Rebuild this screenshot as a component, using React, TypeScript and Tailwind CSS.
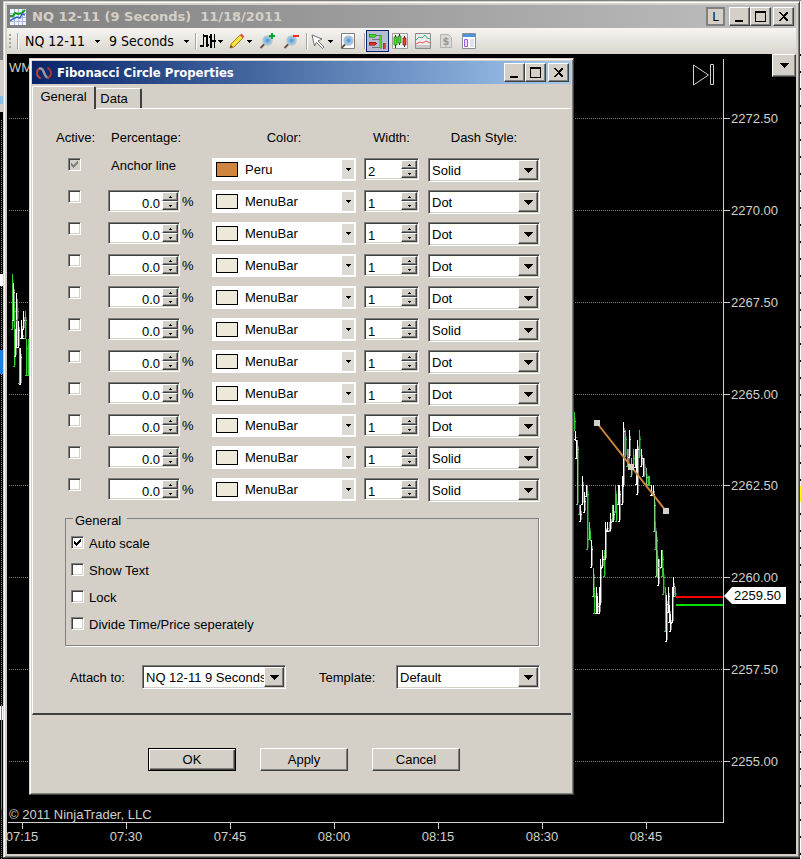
import { ReactNode, useState } from 'react'

const raised = 'bg-[#d4d0c8] border border-t-white border-l-white border-b-[#404040] border-r-[#404040] shadow-[inset_-1px_-1px_#808080]'
const sunken = 'bg-white border border-t-[#808080] border-l-[#808080] border-b-white border-r-white shadow-[inset_1px_1px_#404040,inset_-1px_-1px_#d4d0c8]'
const frame = 'bg-[#d4d0c8] border border-t-[#d4d0c8] border-l-[#d4d0c8] border-b-[#404040] border-r-[#404040] shadow-[inset_1px_1px_#fff,inset_-1px_-1px_#808080]'

const dashStyles = ['Solid', 'Dot', 'Dot', 'Dot', 'Dot', 'Solid', 'Dot', 'Dot', 'Dot', 'Solid', 'Solid']

const prices = [
    { y: 118, label: '2272.50' },
    { y: 210, label: '2270.00' },
    { y: 302, label: '2267.50' },
    { y: 394, label: '2265.00' },
    { y: 485, label: '2262.50' },
    { y: 577, label: '2260.00' },
    { y: 669, label: '2257.50' },
    { y: 761, label: '2255.00' },
]

const times = [
    { x: 22, label: '07:15' },
    { x: 126, label: '07:30' },
    { x: 230, label: '07:45' },
    { x: 334, label: '08:00' },
    { x: 438, label: '08:15' },
    { x: 542, label: '08:30' },
    { x: 646, label: '08:45' },
]

const barColors: Record<string, string> = { g: '#32cd32', w: '#ffffff', l: '#7fd07f', s: '#808080' }

// x, high, low, colour
const bars: [number, number, number, string][] = [
    [12, 274, 330, 'g'], [13, 283, 321, 'w'], [14, 302, 367, 'g'], [15, 329, 357, 'w'], [16, 293, 348, 'w'],
    [17, 302, 321, 's'], [18, 321, 348, 'w'], [19, 348, 384, 'l'], [20, 348, 385, 'w'], [21, 320, 339, 'w'], [22, 329, 339, 'w'],
    [23, 311, 330, 'w'], [25, 311, 339, 'g'], [26, 339, 376, 'g'], [28, 339, 376, 'g'],
    [574, 412, 431, 'g'], [575, 431, 440, 'w'], [576, 440, 459, 'w'], [577, 440, 505, 'l'], [579, 505, 515, 'g'],
    [580, 505, 522, 'w'], [582, 476, 505, 'w'], [584, 492, 513, 'w'], [586, 485, 497, 'w'], [587, 485, 550, 'g'],
    [589, 522, 540, 'l'], [590, 531, 540, 'g'], [591, 540, 568, 'w'], [593, 568, 597, 'l'], [594, 587, 614, 'g'],
    [596, 587, 614, 'w'], [597, 597, 614, 'w'], [599, 587, 614, 'w'], [600, 559, 605, 'w'], [602, 550, 568, 'w'],
    [604, 550, 577, 'g'], [605, 522, 560, 'w'], [607, 522, 531, 'w'], [609, 522, 531, 's'], [610, 513, 531, 'w'], [612, 505, 522, 'l'],
    [613, 505, 522, 'w'], [615, 485, 513, 'g'], [616, 495, 522, 'g'], [618, 485, 505, 'w'], [619, 485, 522, 'w'],
    [622, 476, 505, 'w'], [623, 422, 487, 'w'], [625, 430, 457, 'g'], [627, 449, 467, 'g'], [628, 449, 467, 's'], [629, 430, 458, 'w'],
    [631, 458, 477, 'l'], [633, 449, 467, 'g'], [635, 449, 468, 'w'], [636, 449, 485, 'w'], [637, 440, 495, 'w'], [639, 430, 458, 'g'],
    [641, 449, 467, 'w'], [643, 458, 477, 'w'], [644, 458, 477, 's'], [646, 468, 485, 'l'], [648, 476, 485, 'g'],
    [649, 476, 485, 'g'], [651, 485, 496, 'w'], [653, 485, 496, 'w'], [654, 496, 532, 'l'], [655, 522, 550, 's'],
    [656, 531, 577, 'l'], [657, 550, 577, 'g'], [658, 559, 586, 'w'], [659, 559, 568, 's'], [661, 550, 568, 'w'], [662, 550, 577, 'g'],
    [663, 568, 595, 'g'], [665, 587, 632, 'g'], [666, 595, 642, 'w'], [668, 587, 613, 'w'], [669, 605, 623, 'w'],
    [670, 614, 632, 'w'], [672, 587, 623, 'w'], [673, 577, 597, 'w'], [675, 587, 597, 'g'],
]

function Icon({ children }: { children: ReactNode }) {
    return (
        <svg width="16" height="16" viewBox="0 0 16 16" className="shrink-0" aria-hidden="true">
            {children}
        </svg>
    )
}

function Caret() {
    return (
        <svg width="5" height="3" viewBox="0 0 5 3" className="shrink-0" shapeRendering="crispEdges" aria-hidden="true">
            <path d="M0 0h5L2.500 3z" />
        </svg>
    )
}

function Separator() {
    return <span className="h-4 w-px bg-[#a9a69f] shadow-[1px_0_#fff]" />
}

function CaptionButton({ kind }: { kind: 'Minimize' | 'Maximize' | 'Close' }) {
    return (
        <button aria-label={kind} className={`${raised} flex h-[19px] w-[21px] items-center justify-center`}>
            <svg width="13" height="13" viewBox="0 0 13 13" shapeRendering="crispEdges" aria-hidden="true">
                {kind === 'Minimize' && <path d="M2 10h8v2H2z" />}
                {kind === 'Maximize' && <path d="M1 1h11v11H1zM2 3v8h9V3z" fillRule="evenodd" />}
                {kind === 'Close' && <path d="M2 2h2l2.500 3L9 2h2v1L7.500 6.500 11 10v1H9L6.500 8 4 11H2v-1l3.500-3.500L2 3z" />}
            </svg>
        </button>
    )
}

function Lens() {
    return (
        <>
            <path d="M6 10.500L1.500 15" stroke="#6b5248" strokeWidth="2" />
            <circle cx="8.500" cy="7.500" r="4.500" fill="#8fc0e8" stroke="#b9c4cc" strokeWidth="1.500" />
            <circle cx="8.500" cy="7.500" r="2" fill="#5f9fd4" />
        </>
    )
}

function Toolbar() {
    return (
        <div className="flex h-[26px] items-center bg-gradient-to-b from-[#f6f5f3] to-[#d9d5cd] font-['DejaVu_Sans_Condensed','DejaVu_Sans',sans-serif] text-sm text-black">
            <span className="ml-[2px] flex w-[3px] flex-col gap-[2px]">
                <span className="size-[2px] bg-[#a8a59e]" />
                <span className="size-[2px] bg-[#a8a59e]" />
                <span className="size-[2px] bg-[#a8a59e]" />
                <span className="size-[2px] bg-[#a8a59e]" />
            </span>
            <span className="w-[5px]" />
            <Separator />
            <button className="flex h-[22px] w-[84px] items-center justify-between pr-[2px] pl-[7px] whitespace-nowrap">
                NQ 12-11 <Caret />
            </button>
            <button className="flex h-[22px] w-[89px] items-center justify-between pr-[2px] pl-[7px] whitespace-nowrap">
                9 Seconds <Caret />
            </button>
            <span className="w-1" />
            <Separator />
            <button aria-label="Chart style" className="flex w-[30px] items-center gap-[2px] pl-1">
                <svg width="16" height="16" viewBox="0 0 16 16" className="shrink-0" shapeRendering="crispEdges" aria-hidden="true">
                    <path d="M3 1h1v13H3zM0 12h3v2H0zM4 2h1v2H4zM6 2h2v12H6zM5 2h1v2H5zM8 11h1v2H8zM10 1h2v14h-2zM9 3h1v2H9zM14 1h1v14h-1zM12 7h2v2h-2zM15 7h1v2h-1z" />
                </svg>
                <Caret />
            </button>
            <button aria-label="Drawing tools" className="flex w-7 items-center gap-[2px] pl-[3px]">
                <Icon>
                    <path d="M1 15l1-4 9-9 3 3-9 9z" fill="#f7dc2e" stroke="#a8862a" />
                    <path d="M3.500 12.500l8-8" stroke="#fff27a" />
                    <path d="M11 2l1.500-1.500 3 3L14 5z" fill="#e0545a" />
                    <path d="M1 15l1-3 2 2z" fill="#6b4a18" />
                </Icon>
                <Caret />
            </button>
            <button aria-label="Zoom in" className="w-6 pl-[5px]">
                <Icon>
                    <Lens />
                    <path d="M10 3h6M13 0v6" stroke="#0aa52c" strokeWidth="2" />
                </Icon>
            </button>
            <button aria-label="Zoom out" className="w-6 pl-[5px]">
                <Icon>
                    <Lens />
                    <path d="M10 3h6" stroke="#f02a1c" strokeWidth="2" />
                </Icon>
            </button>
            <span className="w-1" />
            <Separator />
            <button aria-label="Cursor" className="flex w-7 items-center gap-[2px] pl-[3px]">
                <Icon>
                    <path d="M2 2l10 4-4 2 6 6-1.500 1.500-6-6L4.500 13z" fill="#fff" stroke="#6f6f6f" />
                </Icon>
                <Caret />
            </button>
            <button aria-label="Data box" className="w-[25px] pl-[5px]">
                <Icon>
                    <path d="M1.500.500h13v15h-13z" fill="#fff" stroke="#7d7d7d" />
                    <Lens />
                </Icon>
            </button>
            <span className="w-1" />
            <Separator />
            <button aria-label="Chart trader" aria-pressed="true" className="ml-px flex h-[22px] w-[23px] items-center justify-center border border-[#0a246a] bg-[#b6bdd2]">
                <svg width="17" height="16" viewBox="0 0 17 16" shapeRendering="crispEdges" aria-hidden="true">
                    <path d="M0 1h6l2 1.500L6 4H0z" fill="#3fd62e" stroke="#1f6a1a" strokeWidth=".5" />
                    <path d="M0 9h6l2 1.500L6 12H0z" fill="#e02a22" stroke="#701410" strokeWidth=".5" />
                    <path d="M8 2h3M8 6h3M3 6h5M3 14h8" stroke="#777" />
                    <path d="M10.500 2h2v13h-2z" fill="#4fdc2f" stroke="#3f8a34" strokeWidth=".5" />
                    <path d="M14 10h2v6h-2z" fill="#e03a32" stroke="#7c2420" strokeWidth=".5" />
                </svg>
            </button>
            <button aria-label="Indicators" className="w-[23px] pl-[3px]">
                <Icon>
                    <path d="M.500.500h15v15H.500z" fill="#f2f2f2" stroke="#9c9c9c" />
                    <path d="M3.500 2v13M7.500 1v11M12.500 3v11" stroke="#333" />
                    <path d="M2 4h3v8H2zM6 3h3v7H6z" fill="#4fdc2f" stroke="#1f6a1a" strokeWidth=".7" />
                    <path d="M11 5h3v7h-3z" fill="#e8402f" stroke="#801a14" strokeWidth=".7" />
                </Icon>
            </button>
            <button aria-label="Strategies" className="w-[23px] pl-[3px]">
                <Icon>
                    <path d="M.500.500h15v15H.500z" fill="#ececec" stroke="#8c8c8c" />
                    <path d="M1 12h14v3H1z" fill="#c8c8c8" />
                    <path d="M1 7l3-3 3 1 3-3 2 3 3 1" stroke="#3fae7a" fill="none" />
                    <path d="M1 11l4-2 3 1 3-2 4 2" stroke="#e05a5a" fill="none" />
                </Icon>
            </button>
            <button aria-label="Account" disabled className="w-[23px] pl-[3px]">
                <Icon>
                    <path d="M2.500 1.500h8l3 3v10h-11z" fill="#dcdad6" stroke="#b4b2ae" />
                    <text x="8" y="12" textAnchor="middle" fontSize="11" fontWeight="bold" fill="#9a9894">$</text>
                </Icon>
            </button>
            <button aria-label="Properties" className="w-[23px] pl-[3px]">
                <Icon>
                    <path d="M1.500.500h13v15h-13z" fill="#fff" stroke="#8c8c98" />
                    <path d="M2 1h12v3H2z" fill="#4a94d8" />
                    <path d="M3.500 6.500h3v7h-3z" fill="#e8dcff" stroke="#9a5cf0" />
                    <path d="M9 7h4M9 9h4M9 11h4M9 13h4" stroke="#b8c4dc" />
                </Icon>
            </button>
        </div>
    )
}

function Chart() {
    return (
        <svg viewBox="7 54 789 800" className="block h-auto w-full bg-black font-['Liberation_Sans',Arial,sans-serif]" fontSize="13" fill="#d4d0c8" role="img" aria-label="NQ 12-11 price chart">
            <g shapeRendering="crispEdges">
                {prices.map((p) => (
                    <g key={p.label}>
                        <path d={`M9 ${p.y + 0.5}H723`} stroke="#808080" strokeDasharray="1 1" />
                        <path d={`M724 ${p.y + 0.5}h6`} stroke="#d4d0c8" />
                    </g>
                ))}
                {times.map((t) => (
                    <path key={t.label} d={`M${t.x + 0.5} 823v6`} stroke="#d4d0c8" />
                ))}
                <path d="M723.500 59V822.500H8" stroke="#d4d0c8" fill="none" />
                {bars.map(([x, high, low, color]) => (
                    <g key={`${x}-${high}`} stroke={barColors[color]}>
                        <path d={`M${x + 1.5} ${high + 6}V${low - 2}`} opacity=".45" />
                        <path d={`M${x + 0.5} ${high}V${low}M${x - 1} ${low - 0.5}h2M${x} ${high + 9.5}h2`} />
                    </g>
                ))}
                <path d="M676 596h47v2h-47z" fill="#ff0000" />
                <path d="M676 604h47v2h-47z" fill="#00e000" />
            </g>
            {prices.map((p) => (
                <text key={p.label} x="731" y={p.y + 5}>{p.label}</text>
            ))}
            {times.map((t) => (
                <text key={t.label} x={t.x} y="841" textAnchor="middle">{t.label}</text>
            ))}
            <path d="M597 423l69 88" stroke="#cd853f" strokeWidth="2" />
            <path d="M594 420h6v6h-6zM628 464h6v6h-6zM663 508h6v6h-6z" />
            <path d="M724 596l8-9h54v17h-54z" fill="#fff" />
            <text x="734" y="600" fill="#000">2259.50</text>
            <path d="M693.500 65v20l15-10zM710.500 64.500h3v20h-3z" fill="none" stroke="#d4d0c8" />
            <text x="9" y="72">WMA(20)</text>
            <text x="9" y="819">© 2011 NinjaTrader, LLC</text>
        </svg>
    )
}

function CheckBox({ id, label, checked = false, disabled = false }: { id: string; label?: string; checked?: boolean; disabled?: boolean }) {
    const [on, setOn] = useState(checked)
    return (
        <span className="grid size-[13px] shrink-0">
            <input
                id={id}
                type="checkbox"
                aria-label={label}
                checked={on}
                disabled={disabled}
                onChange={(e) => setOn(e.target.checked)}
                className={`${sunken} col-start-1 row-start-1 size-[13px] appearance-none disabled:bg-[#d4d0c8]`}
            />
            {on && (
                <svg viewBox="0 0 13 13" className="pointer-events-none col-start-1 row-start-1 size-[13px]" shapeRendering="crispEdges" aria-hidden="true">
                    <path d="M3 5h1v1h1v1h1v-1h1v-1h1v-1h1v-1h1v3h-1v1h-1v1h-1v1h-1v1h-1v-1h-1v-1h-1z" fill={disabled ? '#808080' : '#000'} />
                </svg>
            )}
        </span>
    )
}

function Spinner({ label, start, step, align }: { label: string; start: number; step: number; align: 'left' | 'right' }) {
    const [value, setValue] = useState(start)
    const text = step < 1 ? value.toFixed(1) : String(value)
    return (
        <div className={`${sunken} flex h-[22px] w-full p-px`}>
            <input
                type="text"
                aria-label={label}
                value={text}
                onChange={(e) => setValue(Number(e.target.value) || 0)}
                className={`h-[18px] min-w-0 flex-1 px-[2px] pt-1 leading-[14px] outline-none ${align === 'right' ? 'text-right' : 'text-left'}`}
            />
            <span className="flex w-4 flex-col bg-[#d4d0c8]">
                <button aria-label={`${label} up`} onClick={() => setValue(value + step)} className={`${raised} flex h-[9px] w-full items-center justify-center`}>
                    <svg width="3" height="2" viewBox="0 0 3 2" shapeRendering="crispEdges" aria-hidden="true"><path d="M1 0h1v1h1v1H0V1h1z" /></svg>
                </button>
                <button aria-label={`${label} down`} onClick={() => setValue(value - step)} className={`${raised} flex h-[9px] w-full items-center justify-center`}>
                    <svg width="3" height="2" viewBox="0 0 3 2" shapeRendering="crispEdges" aria-hidden="true"><path d="M0 0h3v1H2v1H1V1H0z" /></svg>
                </button>
            </span>
        </div>
    )
}

function DropDown({ id, label, value, options }: { id?: string; label?: string; value: string; options: string[] }) {
    return (
        <div className={`${sunken} relative h-6 w-full p-px`}>
            <select id={id} aria-label={label} defaultValue={value} className="block h-5 w-full appearance-none overflow-hidden bg-transparent pt-px pr-5 pl-[2px] outline-none">
                {options.map((o) => (
                    <option key={o}>{o}</option>
                ))}
            </select>
            <span className={`${raised} pointer-events-none absolute top-px right-px flex size-5 items-center justify-center`}>
                <svg width="9" height="5" viewBox="0 0 9 5" shapeRendering="crispEdges" aria-hidden="true"><path d="M0 0h9L4.500 5z" /></svg>
            </span>
        </div>
    )
}

function ColorDropDown({ label, name, swatch }: { label: string; name: string; swatch: string }) {
    return (
        <div className="relative h-[23px] w-[144px] bg-white">
            <select aria-label={label} defaultValue={name} className="block h-[23px] w-full appearance-none bg-transparent pr-4 pl-[33px] outline-none">
                <option>Peru</option>
                <option>MenuBar</option>
            </select>
            <span className={`pointer-events-none absolute top-1 left-1 h-[15px] w-[22px] border border-black ${swatch}`} />
            <span className="pointer-events-none absolute top-[2px] right-[2px] flex h-[19px] w-3 items-center justify-center bg-[#dcdad3]">
                <Caret />
            </span>
        </div>
    )
}

function LevelRow({ index, dash }: { index: number; dash: string }) {
    const anchor = index === 0
    return (
        <div className="grid h-6 grid-cols-[52px_104px_152px_64px_112px] items-start">
            <div className="pl-3">
                <CheckBox id={`active-${index}`} label={`Active ${index}`} checked={anchor} disabled={anchor} />
            </div>
            {anchor ? (
                <span className="pl-[3px] leading-4">Anchor line</span>
            ) : (
                <div className="flex items-center gap-[2px]">
                    <div className="w-[72px]">
                        <Spinner label={`Percentage ${index}`} start={0} step={0.1} align="right" />
                    </div>
                    <span className="pt-px">%</span>
                </div>
            )}
            <ColorDropDown label={`Color ${index}`} name={anchor ? 'Peru' : 'MenuBar'} swatch={anchor ? 'bg-[#cd853f]' : 'bg-[#ece9d8]'} />
            <div className="w-[55px]">
                <Spinner label={`Width ${index}`} start={anchor ? 2 : 1} step={1} align="left" />
            </div>
            <DropDown label={`Dash style ${index}`} value={dash} options={['Solid', 'Dot']} />
        </div>
    )
}

function PropertiesDialog() {
    const generalOptions = ['Auto scale', 'Show Text', 'Lock', 'Divide Time/Price seperately']
    return (
        <div role="dialog" aria-label="Fibonacci Circle Properties" className={`${frame} absolute top-[4px] left-[22px] w-[545px] p-[2px] font-['Liberation_Sans',Arial,sans-serif] text-[13px] text-black`}>
            <div className="flex h-[23px] items-center bg-gradient-to-r from-[#0a246a] to-[#a6caf0] pr-[2px] pl-1">
                <Icon>
                    <g fill="none" strokeLinecap="round">
                        <path d="M4 13C0 11 0 5 4 3.500" stroke="#b0453c" strokeWidth="2" />
                        <path d="M4 3.500c5-1 3 9 8 9" stroke="#9a96a4" strokeWidth="2.500" />
                        <path d="M12 12.500c4-1 4-7 0-9.500" stroke="#a8342c" strokeWidth="2" />
                    </g>
                </Icon>
                <h2 className="ml-[5px] flex-1 font-['DejaVu_Sans_Condensed','DejaVu_Sans',sans-serif] text-[13px] font-bold whitespace-nowrap text-white">Fibonacci Circle Properties</h2>
                <CaptionButton kind="Minimize" />
                <CaptionButton kind="Maximize" />
                <span className="w-[2px]" />
                <CaptionButton kind="Close" />
            </div>

            <div role="tablist" className="flex h-6 items-end">
                <button role="tab" aria-selected="true" className="z-10 -mb-px h-[23px] w-16 rounded-t-[2px] border-t border-r-2 border-l border-t-white border-r-[#404040] border-l-white bg-[#d4d0c8] pb-1">
                    General
                </button>
                <button role="tab" aria-selected="false" className="h-5 w-[46px] rounded-t-[2px] border-t border-r-2 border-t-white border-r-[#404040] pr-[8px]">
                    Data
                </button>
            </div>

            <div role="tabpanel" className="border-t border-b-2 border-l border-t-white border-b-[#404040] border-l-white pt-[19px] pr-[31px] pb-[24px] pl-[23px]">
                <div className="mb-[10px] grid grid-cols-[52px_104px_152px_64px_112px] leading-5">
                    <span>Active:</span>
                    <span className="pl-[3px]">Percentage:</span>
                    <span className="w-[144px] text-center">Color:</span>
                    <span className="w-[55px] text-center">Width:</span>
                    <span className="text-center">Dash Style:</span>
                </div>
                <div className="flex flex-col gap-2">
                    {dashStyles.map((dash, i) => (
                        <LevelRow key={i} index={i} dash={dash} />
                    ))}
                </div>

                <fieldset className="mt-[6px] mr-px ml-[9px] border border-[#808080] px-[5px] pt-px pb-2 shadow-[1px_1px_#fff]">
                    <legend className="ml-[2px] px-[2px] pt-[6px] pr-[6px] leading-[14px]">General</legend>
                    {generalOptions.map((option, i) => (
                        <div key={option} className="flex h-[27px] items-center gap-[5px]">
                            <CheckBox id={`general-${i}`} checked={i === 0} />
                            <label htmlFor={`general-${i}`} className="pt-[2px]">{option}</label>
                        </div>
                    ))}
                </fieldset>

                <div className="mt-[19px] flex items-center pl-[14px]">
                    <label htmlFor="attach" className="w-[72px] pt-[2px]">Attach to:</label>
                    <div className="w-[144px]">
                        <DropDown id="attach" value="NQ 12-11 9 Seconds" options={['NQ 12-11 9 Seconds']} />
                    </div>
                    <label htmlFor="template" className="ml-[33px] w-[77px] pt-[2px]">Template:</label>
                    <div className="w-[144px]">
                        <DropDown id="template" value="Default" options={['Default']} />
                    </div>
                </div>
            </div>

            <div className="flex justify-center gap-6 pt-[33px] pb-[21px] pl-[5px]">
                <button className="h-[23px] w-[88px] border border-black bg-[#d4d0c8] shadow-[inset_1px_1px_#fff,inset_-1px_-1px_#404040,inset_-2px_-2px_#808080]">OK</button>
                <button className={`${raised} h-[23px] w-[88px]`}>Apply</button>
                <button className={`${raised} h-[23px] w-[88px]`}>Cancel</button>
            </div>
        </div>
    )
}

export default function App() {
    return (
        <div className="flex min-h-screen items-stretch overflow-hidden border-t border-[#808080] bg-black">
            {/* sliver of the window behind */}
            <svg width="3" height="858" viewBox="0 1 3 858" className="shrink-0" shapeRendering="crispEdges" aria-hidden="true">
                <path d="M0 1h3v59H0z" fill="#808080" />
                <path d="M0 60h3v52H0z" fill="#d4d0c8" />
                <path d="M0 96h3v8H0z" fill="#8fc0e8" />
                <path d="M1.500 120v739" stroke="#808080" strokeDasharray="1 1" />
                <path d="M0 274h3v12H0zM0 706h3v14H0z" fill="#fff" />
                <path d="M0 350h3v24H0z" fill="#1e7fe8" />
                <path d="M1 704h1v105H1z" fill="#00e000" />
                <path d="M1 809h1v9H1z" fill="#e00000" />
            </svg>

            <div className={`${frame} mb-px min-w-0 flex-1 p-[3px]`}>
                <div className="flex h-[23px] items-center bg-gradient-to-r from-[#808080] to-[#c0c0c0] pr-[2px] pl-[3px]">
                    <Icon>
                        <path d="M0 0h16v16H0z" fill="#eef2fa" />
                        <path d="M4.500 0v16M8.500 0v16M12.500 0v16M0 4.500h16M0 8.500h16M0 12.500h16" stroke="#a9b8dc" />
                        <path d="M0 7h3l2-3 3 1 4-1 3-3" stroke="#12a01a" strokeWidth="2" fill="none" />
                        <path d="M0 12l3-2 4-2 3 1 2-4 3 1" stroke="#3c62c8" strokeWidth="1.500" fill="none" />
                    </Icon>
                    <h1 className="ml-[6px] flex-1 font-['DejaVu_Sans',sans-serif] text-[13px] font-bold whitespace-pre text-[#d4d0c8]">NQ 12-11 (9 Seconds)  11/18/2011</h1>
                    <button aria-label="Link" className="mr-1 h-[19px] w-[19px] border-2 border-[#808080] bg-[#d4d0c8] font-['DejaVu_Sans_Condensed',sans-serif] text-[13px] leading-[15px] text-black">L</button>
                    <CaptionButton kind="Minimize" />
                    <CaptionButton kind="Maximize" />
                    <span className="w-[2px]" />
                    <CaptionButton kind="Close" />
                </div>
                <Toolbar />
                <div className="relative">
                    <Chart />
                    <button aria-label="Chart menu" className={`${raised} absolute top-0 right-0 flex h-[23px] w-6 items-center justify-center`}>
                        <svg width="9" height="5" viewBox="0 0 9 5" shapeRendering="crispEdges" aria-hidden="true"><path d="M0 0h9L4.500 5z" /></svg>
                    </button>
                    <PropertiesDialog />
                </div>
            </div>

            <svg width="1" height="858" viewBox="0 1 1 858" className="shrink-0" shapeRendering="crispEdges" aria-hidden="true">
                <path d="M0 1h1v858H0z" fill="#fff" />
                <path d="M.500 54v805" stroke="#000" strokeDasharray="2 15" />
                <path d="M0 486h1v16H0z" fill="#ffff00" />
            </svg>
        </div>
    )
}
